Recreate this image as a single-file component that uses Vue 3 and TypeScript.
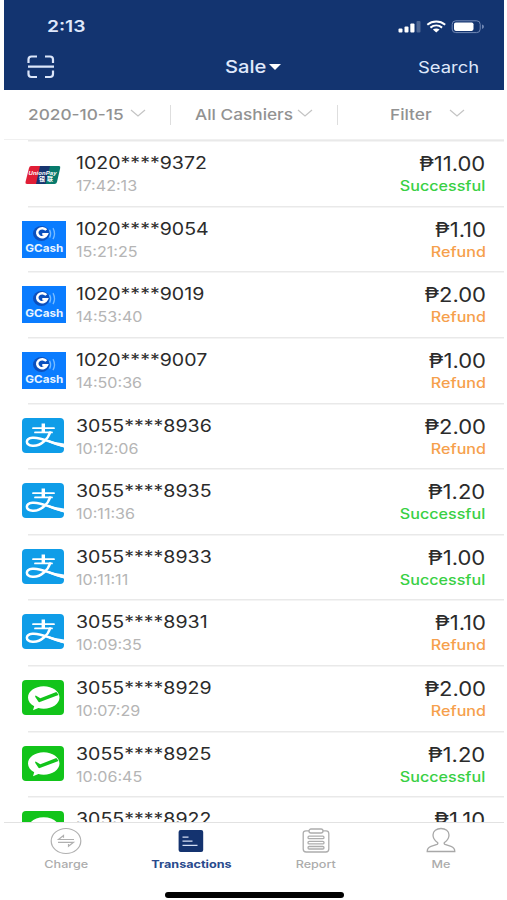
<script setup lang="ts">
type Provider = 'unionpay' | 'gcash' | 'alipay' | 'wechat'
type Status = 'Successful' | 'Refund'

interface Transaction {
  provider: Provider
  account: string
  time: string
  amount: string
  status: Status
}

const transactions: Transaction[] = [
  { provider: 'unionpay', account: '1020****9372', time: '17:42:13', amount: '11.00', status: 'Successful' },
  { provider: 'gcash', account: '1020****9054', time: '15:21:25', amount: '1.10', status: 'Refund' },
  { provider: 'gcash', account: '1020****9019', time: '14:53:40', amount: '2.00', status: 'Refund' },
  { provider: 'gcash', account: '1020****9007', time: '14:50:36', amount: '1.00', status: 'Refund' },
  { provider: 'alipay', account: '3055****8936', time: '10:12:06', amount: '2.00', status: 'Refund' },
  { provider: 'alipay', account: '3055****8935', time: '10:11:36', amount: '1.20', status: 'Successful' },
  { provider: 'alipay', account: '3055****8933', time: '10:11:11', amount: '1.00', status: 'Successful' },
  { provider: 'alipay', account: '3055****8931', time: '10:09:35', amount: '1.10', status: 'Refund' },
  { provider: 'wechat', account: '3055****8929', time: '10:07:29', amount: '2.00', status: 'Refund' },
  { provider: 'wechat', account: '3055****8925', time: '10:06:45', amount: '1.20', status: 'Successful' },
  { provider: 'wechat', account: '3055****8922', time: '10:05:52', amount: '1.10', status: 'Successful' },
]
</script>

<template>
  <main class="phone">
    <header class="header">
      <div class="status">
        <span class="clock">2:13</span>
        <svg class="signals" width="88" height="16" viewBox="0 0 88 16">
          <g fill="#fff">
            <rect x="0.5" y="8.4" width="4" height="4.1" rx="1" />
            <rect x="6.5" y="6.4" width="4" height="6.1" rx="1" />
            <rect x="12.3" y="3.6" width="4.2" height="8.9" rx="1" />
            <rect x="18.5" y="1" width="4" height="11.5" rx="1" opacity=".25" />
          </g>
          <g fill="none" stroke="#fff" stroke-width="2">
            <path d="M29.3 4.7c5.2-4.3 12.700-4.300 17.900 0" />
            <path d="M32.400 7.600c3.500-2.800 8.200-2.800 11.700 0" />
          </g>
          <path d="M34.900 9.600c2-1.500 4.700-1.500 6.700 0l-3.350 3z" fill="#fff" />
          <rect x="54.200" y=".8" width="28" height="11.800" rx="3.500" fill="none" stroke="#7188b5" stroke-width="1" />
          <rect x="56" y="2.500" width="19.500" height="8.400" rx="1.800" fill="#fff" />
          <path d="M84 4.500q2 .6 2 2.200t-2 2.200z" fill="#7188b5" />
        </svg>
      </div>
      <nav class="nav">
        <svg class="scan" width="28" height="24" viewBox="0 0 28 24" fill="none" stroke="#dce6fa" stroke-width="2.200">
          <path d="M1.500 8V4.500q0-3 3-3H10M18 1.500h5q3 0 3 3V8M1.500 15.500V19q0 3 3 3H10M18 22h5q3 0 3-3v-3.500M1 11.700h26" />
        </svg>
        <span class="title"><span class="title-text">Sale</span><i class="caret"></i></span>
        <span class="search">Search</span>
      </nav>
    </header>

    <section class="filters">
      <div class="filter date"><span class="filter-text">2020-10-15</span>
        <svg width="16" height="9" viewBox="0 0 16 9"><path d="M1 1l7 6 7-6" /></svg>
      </div>
      <div class="filter cashiers"><span class="filter-text">All Cashiers</span>
        <svg width="16" height="9" viewBox="0 0 16 9"><path d="M1 1l7 6 7-6" /></svg>
      </div>
      <div class="filter more"><span class="filter-text">Filter</span>
        <svg width="16" height="9" viewBox="0 0 16 9"><path d="M1 1l7 6 7-6" /></svg>
      </div>
    </section>

    <section class="list">
      <article v-for="t in transactions" :key="t.account" class="row">
        <div class="logo">
          <svg v-if="t.provider === 'unionpay'" class="union" width="36" height="20" viewBox="0 0 36 20">
            <path d="M6 1h10l-4 18H2q-2 0-1.500-2L4 3q.5-2 2-2z" fill="#e01e36" />
            <path d="M15 1h11l-4 18H11z" fill="#17356f" />
            <path d="M25 1h9q1.700 0 1.200 2L32 17q-.5 2-2.500 2h-9z" fill="#087a6c" />
            <text x="3.500" y="9.500" class="union-latin" textLength="28">UnionPay</text>
            <text x="14" y="15.800" class="union-cjk" textLength="14">银联</text>
          </svg>
          <svg v-else-if="t.provider === 'gcash'" class="gcash" width="44" height="37" viewBox="0 0 44 37">
            <rect width="44" height="37" fill="#0a7cff" />
            <ellipse cx="19.300" cy="12.500" rx="8.300" ry="7.600" fill="#0b4fbd" />
            <path d="M24.300 9.100a5 4.500 0 1 0 .6 4.200H20.300" fill="none" stroke="#fff" stroke-width="2.500" />
            <path d="M27.600 8.800q2 3.900 0 7.800M31 7.100q3 5.600 0 11" fill="none" stroke="#79bcff" stroke-width="1.300" />
            <text x="3.300" y="31.300" class="gcash-name" textLength="38" lengthAdjust="spacingAndGlyphs">GCash</text>
          </svg>
          <svg v-else-if="t.provider === 'alipay'" width="42" height="35" viewBox="0 0 42 35">
            <rect width="42" height="35" rx="4" fill="#0f9de8" />
            <g fill="none" stroke="#fff" stroke-linecap="round">
              <path d="M11 10.200h21M13 14.400h17" stroke-width="1.800" />
              <path d="M21.300 5.500v8.500" stroke-width="3.400" stroke-linecap="butt" />
              <path d="M28 14.500C26.500 20 19 28.500 10.500 27.700c-7.500-.7-7.500-7.200 0-8 8.500-1 18.500 5.300 31.500 8.300" stroke-width="2.500" />
            </g>
            <path d="M27 22.200q7 2.500 15 3.200v4.100q-8-2-15-5z" fill="#fff" />
          </svg>
          <svg v-else width="42" height="35" viewBox="0 0 42 35">
            <rect width="42" height="35" rx="4" fill="#12c41a" />
            <path d="M21.700 6.300c8.800 0 15.800 5 15.800 11.200s-7 11.200-15.800 11.200c-2 0-3.700-.2-5.300-.7L11 30.300l1.200-4C8.300 24.200 6 21 6 17.500 6 11.300 13 6.300 21.700 6.300z" fill="#fff" />
            <path d="M13.700 15.600l4.600 2.700L34.300 12c1 .9 1.700 1.900 2.200 3l-18.700 7.100q-1 .3-1.500-.6l-3-4.600q-.5-1.200.4-1.300z" fill="#12c41a" />
          </svg>
        </div>
        <div class="info">
          <div class="account">{{ t.account }}</div>
          <div class="time">{{ t.time }}</div>
        </div>
        <div class="result">
          <div class="amount"><span class="peso">₱</span>{{ t.amount }}</div>
          <div class="state" :class="t.status.toLowerCase()">{{ t.status }}</div>
        </div>
      </article>
    </section>

    <footer class="tabs">
      <div class="tab">
        <svg width="32" height="28" viewBox="0 0 32 28" fill="none" stroke="#b0b0b0" stroke-width="1.200">
          <ellipse cx="16" cy="14" rx="14.800" ry="12.500" />
          <path d="M24 12.500H8.500l5-4v2.300M8 15.300h15.500l-5 4V17" />
        </svg>
        <span class="tab-label">Charge</span>
      </div>
      <div class="tab active">
        <svg width="32" height="28" viewBox="0 0 32 28">
          <rect x="3.600" y="3" width="24.600" height="22" rx="2" fill="#14336f" />
          <path d="M7.500 10.200h6M7.500 14.200h10M7.500 18.400h15" fill="none" stroke="#d5e0f5" stroke-width="1.200" />
        </svg>
        <span class="tab-label">Transactions</span>
      </div>
      <div class="tab">
        <svg width="32" height="28" viewBox="0 0 32 28" fill="none" stroke="#adadad" stroke-width="1.300">
          <path d="M9 3.800H6Q3.200 3.800 3.200 6.500V22q0 3 3 3h19.600q3 0 3-3V6.500q0-2.700-2.800-2.700h-3" />
          <rect x="9" y="2" width="14" height="4" rx="2" />
          <rect x="8" y="9.200" width="16" height="2.500" rx="1.200" />
          <rect x="8" y="14.400" width="16" height="2.500" rx="1.200" />
          <rect x="8" y="19.500" width="16" height="2.500" rx="1.200" />
        </svg>
        <span class="tab-label">Report</span>
      </div>
      <div class="tab">
        <svg width="32" height="28" viewBox="0 0 32 28" fill="none" stroke="#a8a8a8" stroke-width="1.300">
          <path d="M12.500 15.500C9.500 13.500 8 11 8 8c0-4 3.500-6.500 8-6.500S24 4 24 8c0 3-1.500 5.500-4.500 7.500-.7.700-.3 1.500.5 1.900l6 2c2.700.9 3.800 2.500 3.800 5.100H2.200c0-2.600 1.100-4.200 3.800-5.100l6-2c.8-.4 1.200-1.200.5-1.900z" />
        </svg>
        <span class="tab-label">Me</span>
      </div>
    </footer>
    <div class="home"></div>
  </main>
</template>

<style>
body {
  background: #fff;
  overflow: hidden;
}
</style>

<style scoped>
.phone {
  box-sizing: border-box;
  width: 507px;
  height: 900px;
  padding: 0 3.500px 0 4px;
  display: flex;
  flex-direction: column;
  overflow: hidden;
  font-family: Inter, "Liberation Sans", sans-serif;
  color: #2b2b2b;
}
svg {
  display: block;
  flex: none;
}
.header {
  flex: none;
  height: 90px;
  background: #133470;
  color: #dfe8fb;
}
.status {
  display: flex;
  justify-content: space-between;
  padding: 16px 18px 0 43px;
  height: 20px;
}
.signals {
  margin-top: 3.500px;
}
.clock {
  font-size: 16px;
  line-height: 20px;
  font-weight: 600;
  transform: scaleX(1.2);
  transform-origin: left;
}
.nav {
  display: grid;
  grid-template-columns: 1fr auto 1fr;
  align-items: center;
  height: 24px;
  padding: 19px 24px 0 23px;
}
.title {
  display: flex;
  align-items: center;
  width: 57px;
}
.title-text {
  width: 44px;
  font-size: 17.500px;
  line-height: 24px;
  font-weight: 500;
  transform: scaleX(1.15);
  transform-origin: left;
}
.caret {
  border: 6px solid transparent;
  border-top: 6px solid #fff;
  border-bottom: 0;
}
.search {
  justify-self: end;
  font-size: 16px;
  line-height: 24px;
  transform: scaleX(1.150);
  transform-origin: right;
}
.filters {
  flex: none;
  box-sizing: border-box;
  height: 50px;
  border-bottom: 1px solid #f0f0f0;
  display: flex;
  align-items: center;
}
.filter {
  box-sizing: border-box;
  height: 20px;
  display: flex;
  align-items: center;
  justify-content: space-between;
  font-size: 15px;
  font-weight: 500;
  color: #929292;
}
.filter-text {
  transform: scaleX(1.150);
  transform-origin: left;
  white-space: nowrap;
}
.filter svg {
  fill: none;
  stroke: #c4c4c4;
  stroke-width: 1.200;
  margin-top: -2px;
}
.date {
  width: 167px;
  padding: 0 24px 0 24px;
  border-right: 1px solid #dedede;
}
.cashiers {
  width: 167px;
  padding: 0 24px 0 24px;
  border-right: 1px solid #dedede;
}
.more {
  width: 165px;
  padding: 0 38px 0 52px;
}
.list {
  flex: none;
  height: 682px;
  overflow: hidden;
}
.row {
  box-sizing: border-box;
  height: 65.650px;
  display: flex;
  padding: 0 18px 0 17.500px;
  background: linear-gradient(#e9e9e9, #e9e9e9) 24px 0 / 100% 1.500px no-repeat;
}
.logo {
  width: 54.500px;
  padding-top: 15px;
}
.union {
  margin: 9.500px 0 0 3.500px;
}
.union-latin {
  font: italic 700 6px "Liberation Sans", sans-serif;
  fill: #fff;
}
.union-cjk {
  font: 700 6px "Noto Sans CJK SC", sans-serif;
  fill: #fff;
}
.gcash-name {
  font: 700 10.500px Inter, sans-serif;
  fill: #e8f4ff;
}
.info {
  flex: 1;
  padding-top: 12px;
}
.account {
  font-size: 17px;
  line-height: 22px;
  transform: scaleX(1.150);
  transform-origin: left;
}
.time {
  margin-top: 2px;
  font-size: 14px;
  line-height: 20px;
  color: #b5b5b5;
  transform: scaleX(1.150);
  transform-origin: left;
}
.result {
  text-align: right;
  padding-top: 12px;
}
.amount {
  font-size: 20px;
  line-height: 25px;
  transform: scaleX(1.100);
  transform-origin: right;
}
.state {
  margin-top: -1px;
  font-size: 14px;
  line-height: 20px;
  font-weight: 500;
  transform: scaleX(1.150);
  transform-origin: right;
}
.successful {
  color: #39d044;
}
.refund {
  color: #f6a04c;
}
.tabs {
  flex: none;
  box-sizing: border-box;
  height: 70px;
  border-top: 1px solid #e2e2e2;
  display: grid;
  grid-template-columns: repeat(4, 1fr);
  padding-top: 4px;
}
.tab {
  display: flex;
  flex-direction: column;
  align-items: center;
  font-size: 10.500px;
  line-height: 16px;
  font-weight: 500;
  color: #acacac;
}
.tab-label {
  transform: scaleX(1.200);
  margin-top: 2px;
}
.active {
  color: #294a8d;
  font-weight: 700;
}
.home {
  flex: none;
  width: 179px;
  height: 5.500px;
  margin: 0 0 0 161px;
  border-radius: 3px;
  background: #000;
}
</style>
